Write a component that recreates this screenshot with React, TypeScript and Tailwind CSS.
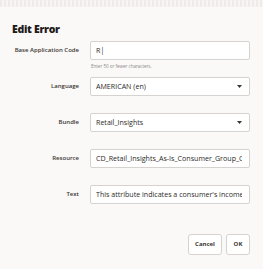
import { ReactNode } from "react";

function Field({ label, children }: { label: string; children: ReactNode }) {
  return (
    <div className="flex items-start">
      <div className="w-[80px] h-[19px] pr-[1px] flex items-center justify-end text-[6px] font-semibold text-[#3a3633] whitespace-nowrap">
        {label}
      </div>
      <div className="ml-[10px] w-[160px]">{children}</div>
    </div>
  );
}

function Box({ value, select }: { value: string; select?: boolean }) {
  return (
    <div className="h-[19px] bg-white border border-[#d6d2cf] rounded-[2px] flex items-center pl-[5px] pr-[7px] overflow-hidden">
      <span className="flex-1 whitespace-nowrap overflow-hidden text-[7.1px] text-[#2d2a28]">{value}</span>
      {select && (
        <svg width="5" height="3" viewBox="0 0 5 3" className="shrink-0">
          <path d="M0 0h5L2.5 3z" fill="#3a3633" />
        </svg>
      )}
    </div>
  );
}

export default function App() {
  return (
    <div
      className="w-[263px] h-[269px] bg-[#fbf9f8] overflow-hidden flex flex-col"
      style={{ fontFamily: '"Open Sans", "Noto Sans", sans-serif' }}
    >
      <div className="h-[7px] bg-[repeating-linear-gradient(90deg,#ece8e6_0px,#ece8e6_2px,#f6f3f1_2px,#f6f3f1_4px)] opacity-80" />
      <div className="pl-[12px] mt-[15px] text-[10.5px] font-extrabold tracking-[-0.3px] text-[#1e1b19] leading-[14px]">
        Edit Error
      </div>
      <div className="mt-[5px] flex flex-col">
        <Field label="Base Application Code">
          <Box value="R|" />
          <div className="mt-[2px] pl-[1px] text-[4.5px] text-[#8a8581] leading-[8px]">Enter 50 or fewer characters.</div>
        </Field>
        <div className="mt-[7px]">
          <Field label="Language">
            <Box value="AMERICAN (en)" select />
          </Field>
        </div>
        <div className="mt-[17px]">
          <Field label="Bundle">
            <Box value="Retail_Insights" select />
          </Field>
        </div>
        <div className="mt-[17px]">
          <Field label="Resource">
            <Box value="CD_Retail_Insights_As-Is_Consumer_Group_Code" />
          </Field>
        </div>
        <div className="mt-[17px]">
          <Field label="Text">
            <Box value="This attribute indicates a consumer's income range" />
          </Field>
        </div>
      </div>
      <div className="mt-[30px] flex justify-end gap-[4px] pr-[13px]">
        <button className="w-[34px] h-[21px] bg-white border border-[#d6d2cf] rounded-[3px] text-[6px] font-bold text-[#3a3633]">
          Cancel
        </button>
        <button className="w-[24px] h-[21px] bg-white border border-[#d6d2cf] rounded-[3px] text-[6px] font-bold text-[#3a3633]">
          OK
        </button>
      </div>
    </div>
  );
}
